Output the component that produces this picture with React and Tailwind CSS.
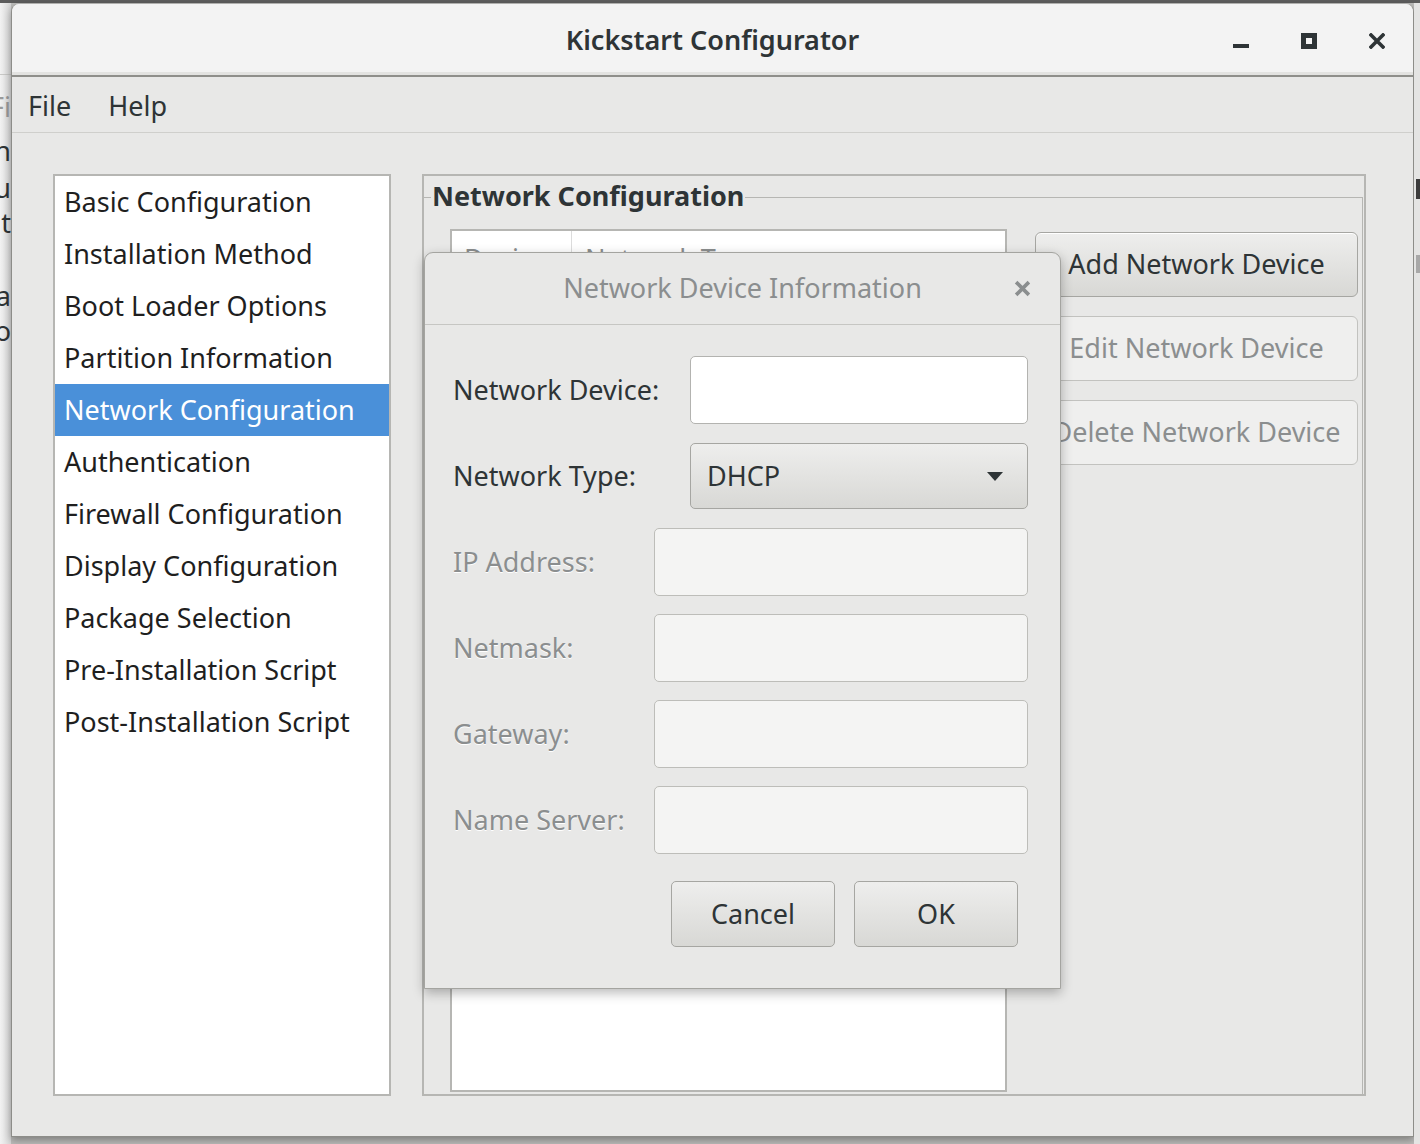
import React from "react";

const sideItems = [
  "Basic Configuration",
  "Installation Method",
  "Boot Loader Options",
  "Partition Information",
  "Network Configuration",
  "Authentication",
  "Firewall Configuration",
  "Display Configuration",
  "Package Selection",
  "Pre-Installation Script",
  "Post-Installation Script",
];

const fields = [
  { label: "IP Address:" },
  { label: "Netmask:" },
  { label: "Gateway:" },
  { label: "Name Server:" },
];

function WindowControls() {
  return (
    <div className="flex items-center justify-end gap-[52px] pr-[28px]">
      <svg width="16" height="16" viewBox="0 0 16 16">
        <rect x="0" y="11" width="16" height="4" fill="#2e3436" />
      </svg>
      <svg width="16" height="16" viewBox="0 0 16 16">
        <rect x="2.5" y="2.5" width="11" height="11" fill="none" stroke="#2e3436" strokeWidth="5" />
      </svg>
      <svg width="16" height="16" viewBox="0 0 16 16">
        <path d="M2 2 L14 14 M14 2 L2 14" stroke="#2e3436" strokeWidth="3.6" strokeLinecap="square" />
      </svg>
    </div>
  );
}

function NetworkDialog() {
  return (
    <div className="absolute left-[424px] top-[252px] w-[637px] h-[737px] bg-[#e8e8e7] border border-[#a4a4a0] rounded-t-[9px] shadow-[0_4px_12px_rgba(0,0,0,0.28)] flex flex-col">
      <div className="h-[72px] border-b border-[#c6c6c3] grid grid-cols-[1fr_auto_1fr] items-center">
        <div></div>
        <div className="text-[#8b8e8f] text-[27px]">Network Device Information</div>
        <div className="flex justify-end pr-[29px]">
          <svg width="17" height="17" viewBox="0 0 16 16">
            <path d="M2 2 L14 14 M14 2 L2 14" stroke="#8b8e8f" strokeWidth="3.4" />
          </svg>
        </div>
      </div>
      <div className="flex flex-col pt-[31px] pl-[28px] pr-[32px]">
        <div className="flex flex-col gap-[18px]">
          <div className="h-[68px] flex items-center justify-between">
            <span className="text-[#2e3436] text-[27px]">Network Device:</span>
            <div className="w-[338px] h-[68px] bg-white border border-[#b3b3b0] rounded-[5px]"></div>
          </div>
          <div className="h-[66px] my-[1px] flex items-center justify-between">
            <span className="text-[#2e3436] text-[27px]">Network Type:</span>
            <div className="w-[338px] h-[66px] border border-[#a6a6a2] rounded-[5px] bg-gradient-to-b from-[#eeeeed] to-[#d8d8d5] flex items-center justify-between pl-[16px] pr-[24px]">
              <span className="text-[#2e3436] text-[27px]">DHCP</span>
              <svg width="16" height="9" viewBox="0 0 16 9">
                <path d="M0 0 L16 0 L8 9 Z" fill="#2e3436" />
              </svg>
            </div>
          </div>
          {fields.map((f) => (
            <div key={f.label} className="h-[68px] flex items-center justify-between">
              <span className="text-[#8b8e8f] text-[27px] [text-shadow:0_1px_0_#ffffff]">{f.label}</span>
              <div className="w-[374px] h-[68px] bg-[#f4f4f3] border border-[#bdbdb9] rounded-[5px]"></div>
            </div>
          ))}
        </div>
        <div className="flex justify-end gap-[19px] mt-[27px] pr-[10px]">
          <div className="w-[164px] h-[66px] border border-[#a6a6a2] rounded-[5px] bg-gradient-to-b from-[#eeeeed] to-[#d8d8d5] flex items-center justify-center text-[#2e3436] text-[27px]">
            Cancel
          </div>
          <div className="w-[164px] h-[66px] border border-[#a6a6a2] rounded-[5px] bg-gradient-to-b from-[#eeeeed] to-[#d8d8d5] flex items-center justify-center text-[#2e3436] text-[27px]">
            OK
          </div>
        </div>
      </div>
    </div>
  );
}

export default function App() {
  return (
    <div className="relative w-[1420px] h-[1144px] overflow-hidden bg-[#bdbdbb] font-['Noto_Sans',sans-serif] flex flex-col">
      <div className="h-[3px] bg-[#5d5d5d] shrink-0"></div>
      <div className="flex flex-1">
        {/* background window peeking on the left */}
        <div className="w-[11px] bg-gradient-to-r from-[#f2f2f2] to-[#d8d8d8] overflow-hidden flex flex-col items-end text-[27px] leading-[36px] text-[#2e3436]">
          <div className="h-[72px] w-full border-b border-[#c8c8c6]"></div>
          <div className="mt-[14px] text-[#9a9a9a] whitespace-nowrap">Fi</div>
          <div className="mt-[8px]">n</div>
          <div className="mt-[1px]">u</div>
          <div className="mt-[-1px]">t</div>
          <div className="mt-[37px]">a</div>
          <div className="mt-[-1px]">o</div>
        </div>

        {/* main window */}
        <div className="w-[1403px] h-[1133px] flex flex-col bg-[#e8e8e7] border-l border-r border-b border-[#8d8d89] rounded-t-[8px] overflow-hidden shadow-[0_3px_8px_rgba(0,0,0,0.35)] mt-[1px]">
          <div className="h-[73px] shrink-0 bg-[#f3f3f3] border-b-2 border-[#8f8f8b] shadow-[inset_0_-3px_0_#e3e3e1] grid grid-cols-[1fr_auto_1fr] items-center pt-[2px]">
            <div></div>
            <div className="text-[#2e3436] text-[27px] font-semibold">Kickstart Configurator</div>
            <WindowControls />
          </div>
          <div className="h-[56px] shrink-0 border-b border-[#cfcfcc] flex items-center gap-[37px] pl-[16px] pt-[3px] text-[#2e3436] text-[27px]">
            <span>File</span>
            <span>Help</span>
          </div>
          <div className="flex-1 flex gap-[31px] pl-[41px] pt-[41px] pb-[40px]">
            <div className="w-[338px] bg-white border-2 border-[#b6b6b3] flex flex-col">
              {sideItems.map((item) => (
                <div
                  key={item}
                  className={
                    item === "Network Configuration"
                      ? "h-[52px] flex items-center pl-[9px] text-[27px] bg-[#4a90d9] text-white"
                      : "h-[52px] flex items-center pl-[9px] text-[27px] text-[#1f1f1f]"
                  }
                >
                  {item}
                </div>
              ))}
            </div>

            <div className="w-[944px] border-2 border-[#b6b6b3] flex flex-col">
              <div className="relative flex-1 flex mt-[21px] mr-[1px] border-t border-r border-[#b6b6b3] pl-[26px] pt-[31px] pb-[2px]">
                <span className="absolute left-[7px] top-[-20px] bg-[#e8e8e7] pl-[1px] pr-[1px] text-[27px] font-bold text-[#2e3436] leading-[36px]">
                  Network Configuration
                </span>
                <div className="w-[557px] bg-white border-2 border-[#b6b6b3]">
                  <div className="h-[50px] flex text-[27px] text-[#8b8e8f]">
                    <div className="w-[120px] border-r border-[#dcdcdc] pl-[12px] pt-[8px]">Device</div>
                    <div className="pl-[13px] pt-[8px]">Network Type</div>
                  </div>
                </div>
                <div className="ml-[28px] w-[323px] flex flex-col gap-[19px] pt-[3px]">
                  <div className="h-[65px] rounded-[6px] border border-[#a6a6a2] bg-gradient-to-b from-[#eeeeed] to-[#d8d8d5] shadow-[inset_0_1px_0_#ffffff] flex items-center justify-center text-[27px] text-[#2e3436]">
                    Add Network Device
                  </div>
                  <div className="h-[65px] rounded-[6px] border border-[#c2c2bf] bg-[#efefee] flex items-center justify-center text-[27px] text-[#8b8e8f]">
                    Edit Network Device
                  </div>
                  <div className="h-[65px] rounded-[6px] border border-[#c2c2bf] bg-[#efefee] flex items-center justify-center text-[27px] text-[#8b8e8f]">
                    Delete Network Device
                  </div>
                </div>
              </div>
            </div>
          </div>
        </div>

        {/* background window peeking on the right */}
        <div className="flex-1 bg-[#e4e4e3] flex flex-col items-end">
          <div className="mt-[176px] w-[4px] h-[20px] bg-[#3c3c3c]"></div>
          <div className="mt-[56px] w-[4px] h-[18px] bg-[#a8a8a8]"></div>
        </div>
      </div>
      <NetworkDialog />
    </div>
  );
}
